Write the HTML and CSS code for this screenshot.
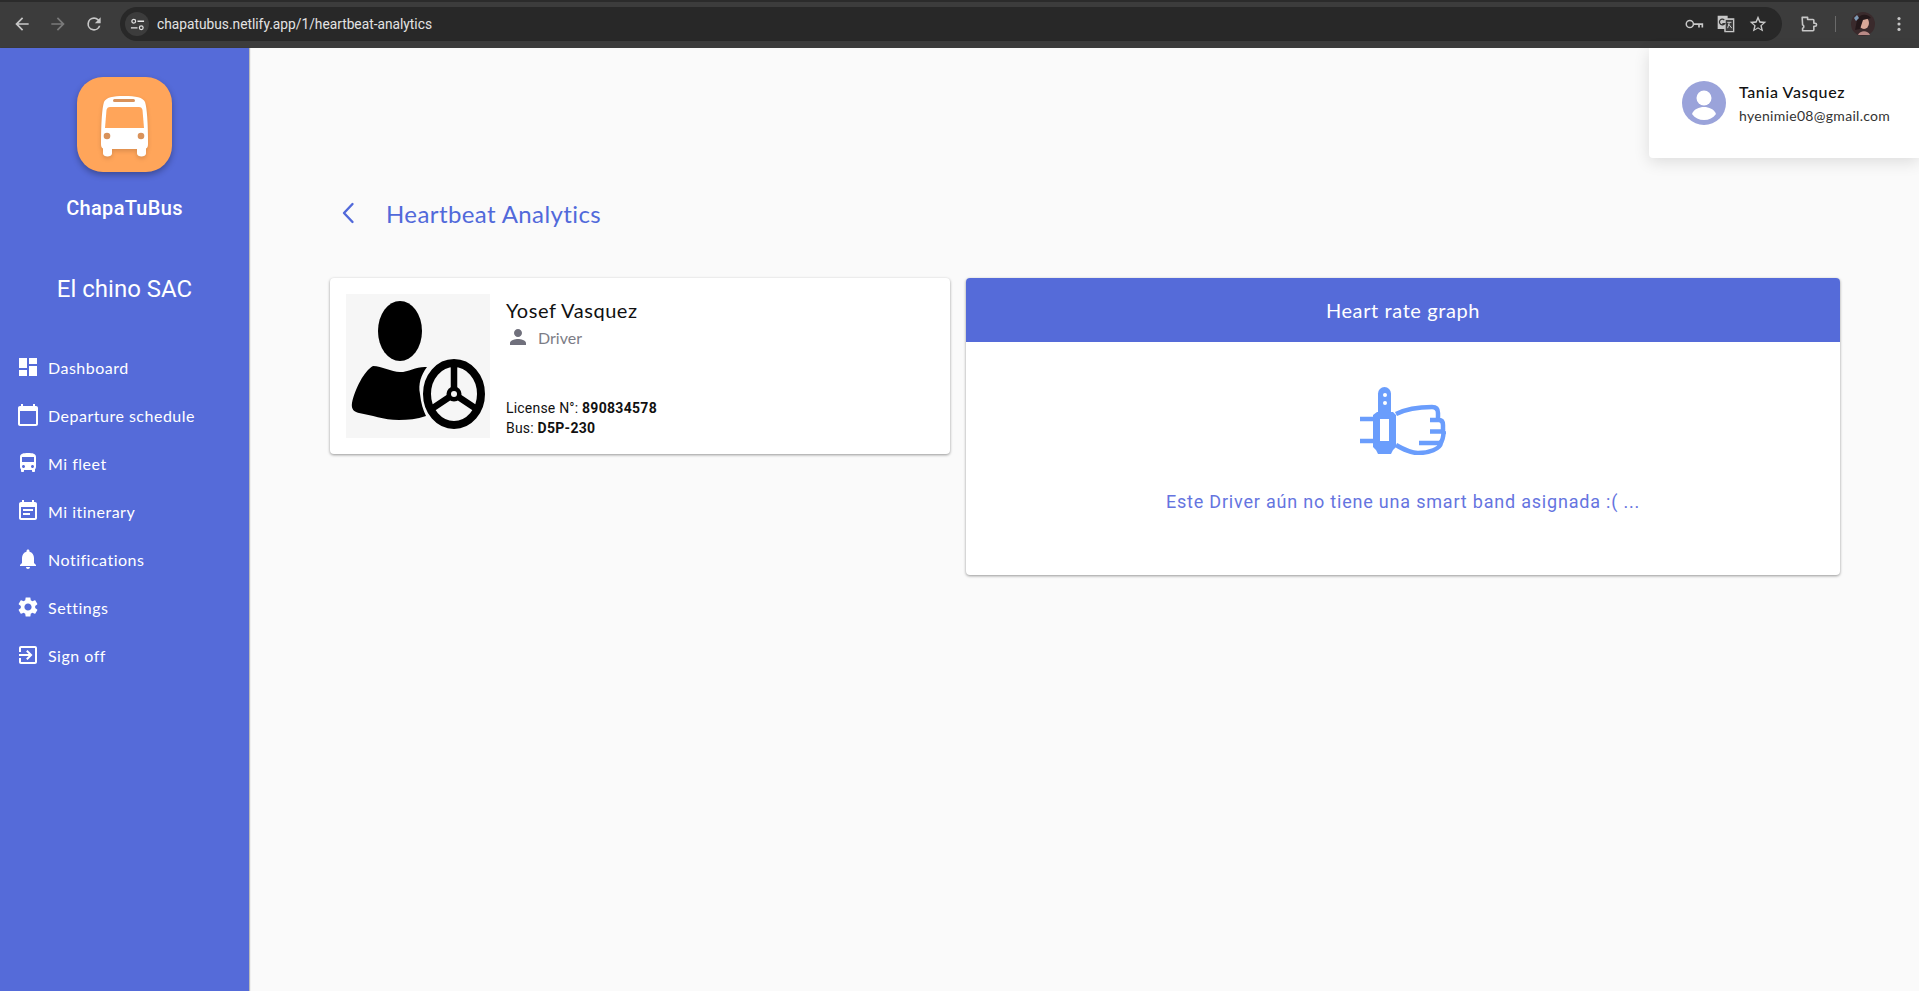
FILE: index.html
```html
<!DOCTYPE html>
<html lang="en">
<head>
  <meta charset="UTF-8">
  <title>Heartbeat Analytics</title>
  <link rel="stylesheet" href="styles.css">
</head>
<body>
  <header class="browser-bar">
    <div class="browser-nav">
      <svg class="browser-icon" viewBox="0 0 24 24"><path d="M20 11H7.83l5.59-5.59L12 4l-8 8 8 8 1.41-1.41L7.83 13H20v-2z"/></svg>
      <svg class="browser-icon browser-icon-off" viewBox="0 0 24 24"><path d="M4 11h12.17l-5.59-5.59L12 4l8 8-8 8-1.41-1.41L16.17 13H4v-2z"/></svg>
      <svg class="browser-icon" viewBox="0 0 24 24"><path d="M17.65 6.35A7.96 7.96 0 0 0 12 4a8 8 0 1 0 7.73 10h-2.08A6 6 0 1 1 12 6c1.66 0 3.14.69 4.22 1.78L13 11h7V4l-2.35 2.35z"/></svg>
    </div>
    <div class="omnibox">
      <span class="site-chip">
        <svg viewBox="0 0 16 16"><circle cx="4" cy="4.500" r="2" fill="none" stroke="#e3e3e3" stroke-width="1.300"/><path d="M8 3.800h7v1.400H8zM1 10.800h7v1.400H1z"/><circle cx="12" cy="11.500" r="2" fill="none" stroke="#e3e3e3" stroke-width="1.300"/></svg>
      </span>
      <span class="url">chapatubus.netlify.app/1/heartbeat-analytics</span>
      <div class="omni-actions">
        <svg class="browser-icon" viewBox="0 0 24 24"><circle cx="7" cy="12" r="4.300" fill="none" stroke="#c7c7c7" stroke-width="1.800"/><path d="M11.500 11.100H23v5h-2v-2.900h-2v2.900h-2v-2.900h-5.500z"/></svg>
        <svg class="browser-icon" viewBox="0 0 24 24"><path d="M2 2h12v3h8v17H10v-4H2V2z" fill="#c7c7c7"/><path d="M11 6.500h10v14.500H11z" fill="#3c3c3c" stroke="#c7c7c7" stroke-width="1.200"/><path d="M13.500 10h5M16 10l-2 7M15 12l4 5" stroke="#c7c7c7" stroke-width="1.200" fill="none"/><path d="M10 7.300A3.400 3.400 0 1 0 10.400 11.500H7.600" stroke="#333" stroke-width="1.500" fill="none"/></svg>
        <svg class="browser-icon" viewBox="0 0 24 24"><path d="M12 15.900l-3.760 2.270 1-4.280-3.320-2.880 4.380-.38L12 6.600l1.700 4.030 4.380.38-3.320 2.880 1 4.280L12 15.900zM22 9.240l-7.190-.61L12 2 9.190 8.630 2 9.240l5.460 4.730L5.820 21 12 17.270 18.180 21l-1.630-7.030L22 9.240z"/></svg>
      </div>
    </div>
    <div class="browser-tools">
      <svg class="browser-icon" viewBox="0 0 24 24"><path d="M5 4h6.500v2.500H18a1 1 0 0 1 1 1V11h1.500a1.800 1.800 0 0 1 0 3.600H19V19a1 1 0 0 1-1 1H5.500v-2.800a2 2 0 0 0 1.500-2 2.200 2.200 0 0 0-1.500-2.200z" fill="none" stroke="#c7c7c7" stroke-width="1.900" stroke-linejoin="round"/></svg>
      <span class="tool-divider"></span>
      <svg class="profile-pic" viewBox="0 0 24 24"><circle cx="12" cy="12" r="12" fill="#3a2a2c"/><ellipse cx="13" cy="11" rx="5" ry="6" fill="#d8a797"/><path d="M6 8c2-6 10-7 14-2l-8 2-3 9-5 1z" fill="#24181a"/><path d="M7 23c2-5 10-5 12 0z" fill="#b98a86"/><path d="M3 6l3-3 2 3-3 3z" fill="#7d9ab5"/></svg>
      <svg class="browser-icon" viewBox="0 0 24 24"><circle cx="12" cy="5.500" r="1.900"/><circle cx="12" cy="12" r="1.900"/><circle cx="12" cy="18.500" r="1.900"/></svg>
    </div>
  </header>

  <div class="app">
    <aside class="sidebar">
      <div class="logo">
        <svg viewBox="0 0 95 95">
          <path d="M47 19c-11 0-18 1.500-20 6-2 6-3 22-3 42 0 3 1 4 2 4.500v5c0 4 9 4 9 0V72h25v4.500c0 4 9 4 9 0v-5c1-.5 2-1.500 2-4.500 0-20-1-36-3-42-2-4.500-9-6-21-6z" fill="#fff"/>
          <path d="M33 30h29c2 0 3 1 3.500 3l1.500 18H28l1.500-18c.5-2 1.500-3 3.500-3z" fill="#ffa55a"/>
          <rect x="36" y="22" width="22" height="3" rx="1.500" fill="#d9925a"/>
          <circle cx="30" cy="59" r="3.300" fill="#d9925a"/>
          <circle cx="64" cy="59" r="3.300" fill="#d9925a"/>
        </svg>
      </div>
      <div class="brand">ChapaTuBus</div>
      <div class="company">El chino SAC</div>
      <nav class="menu">
        <a class="menu-item"><svg viewBox="0 0 24 24"><path d="M3 13h8V3H3v10zm0 8h8v-6H3v6zm10 0h8V11h-8v10zm0-18v6h8V3h-8z"/></svg>Dashboard</a>
        <a class="menu-item"><svg viewBox="0 0 24 24"><path d="M20 3h-1V1h-2v2H7V1H5v2H4c-1.100 0-2 .9-2 2v16c0 1.100.9 2 2 2h16c1.100 0 2-.9 2-2V5c0-1.100-.9-2-2-2zm0 18H4V8h16v13z"/></svg>Departure schedule</a>
        <a class="menu-item"><svg viewBox="0 0 24 24"><path d="M4 16c0 .88.39 1.670 1 2.220V20c0 .55.45 1 1 1h1c.55 0 1-.45 1-1v-1h8v1c0 .55.45 1 1 1h1c.55 0 1-.45 1-1v-1.780c.61-.55 1-1.340 1-2.220V6c0-3.500-3.580-4-8-4s-8 .5-8 4v10zm3.500 1c-.83 0-1.500-.67-1.500-1.500S6.670 14 7.500 14s1.500.67 1.500 1.500S8.330 17 7.500 17zm9 0c-.83 0-1.500-.67-1.500-1.500s.67-1.500 1.500-1.500 1.500.67 1.500 1.500-.67 1.500-1.500 1.500zm1.500-6H6V6h12v5z"/></svg>Mi fleet</a>
        <a class="menu-item"><svg viewBox="0 0 24 24"><path d="M17 10H7v2h10v-2zm2-7h-1V1h-2v2H8V1H6v2H5c-1.110 0-1.990.9-1.990 2L3 19c0 1.100.89 2 2 2h14c1.100 0 2-.9 2-2V5c0-1.100-.9-2-2-2zm0 16H5V8h14v11zm-5-5H7v2h7v-2z"/></svg>Mi itinerary</a>
        <a class="menu-item"><svg viewBox="0 0 24 24"><path d="M12 22c1.100 0 2-.9 2-2h-4c0 1.100.89 2 2 2zm6-6v-5c0-3.070-1.640-5.640-4.500-6.320V4c0-.83-.67-1.500-1.500-1.500s-1.500.67-1.500 1.500v.68C7.630 5.360 6 7.920 6 11v5l-2 2v1h16v-1l-2-2z"/></svg>Notifications</a>
        <a class="menu-item"><svg viewBox="0 0 24 24"><path d="M19.140 12.940c.04-.3.06-.61.06-.94 0-.32-.02-.64-.07-.94l2.030-1.580c.18-.14.23-.41.12-.61l-1.920-3.320c-.12-.22-.37-.29-.59-.22l-2.390.96c-.5-.38-1.030-.7-1.620-.94l-.36-2.540c-.04-.24-.24-.41-.48-.41h-3.840c-.24 0-.43.17-.47.41l-.36 2.540c-.59.24-1.130.57-1.620.94l-2.390-.96c-.22-.08-.47 0-.59.22L2.740 8.870c-.12.21-.08.47.12.61l2.030 1.580c-.05.3-.09.63-.09.94s.02.64.07.94l-2.030 1.580c-.18.14-.23.41-.12.61l1.920 3.320c.12.22.37.29.59.22l2.390-.96c.5.38 1.030.7 1.620.94l.36 2.540c.05.24.24.41.48.41h3.840c.24 0 .44-.17.47-.41l.36-2.540c.59-.24 1.130-.56 1.620-.94l2.390.96c.22.08.47 0 .59-.22l1.920-3.320c.12-.22.07-.47-.12-.61l-2.010-1.580zM12 15.600c-1.980 0-3.600-1.620-3.600-3.600s1.620-3.600 3.600-3.600 3.600 1.620 3.600 3.600-1.620 3.600-3.600 3.600z"/></svg>Settings</a>
        <a class="menu-item"><svg viewBox="0 0 24 24"><path d="M10.090 15.590L11.500 17l5-5-5-5-1.410 1.410L12.670 11H3v2h9.670l-2.580 2.590zM19 3H5c-1.110 0-2 .9-2 2v4h2V5h14v14H5v-4H3v4c0 1.100.89 2 2 2h14c1.100 0 2-.9 2-2V5c0-1.100-.9-2-2-2z"/></svg>Sign off</a>
      </nav>
    </aside>

    <main class="content">
      <div class="user-popup">
        <svg class="user-avatar" viewBox="0 0 44 44">
          <circle cx="22" cy="22" r="22" fill="#9aa3da"/>
          <circle cx="22" cy="17" r="7.500" fill="#fff"/>
          <path d="M10 33c2-5 7-7 12-7s10 2 12 7c-3 4-7 6-12 6s-9-2-12-6z" fill="#fff"/>
        </svg>
        <div class="user-text">
          <div class="user-name">Tania Vasquez</div>
          <div class="user-email">hyenimie08@gmail.com</div>
        </div>
      </div>

      <div class="page-head">
        <svg class="back-icon" viewBox="0 0 14 22"><path d="M11.500 2L3 11l8.500 9" fill="none" stroke="#5169da" stroke-width="2.400" stroke-linecap="round" stroke-linejoin="round"/></svg>
        <h1 class="page-title">Heartbeat Analytics</h1>
      </div>

      <div class="panels">
        <section class="card driver-card">
          <svg class="driver-pic" viewBox="0 0 144 144">
            <rect width="144" height="144" fill="#f6f6f6"/>
            <ellipse cx="54" cy="37" rx="22" ry="30"/>
            <path d="M6 109c3-14 12-32 21-37 9 0 18 6 27 6s17-6 27-5c-6 8-9 17-7 27 1 9 3 16 6 22-9 3-18 4-27 4-16 0-27-5-40-7-5-1-8-4-7-10z"/>
            <ellipse cx="108" cy="100" rx="27" ry="31" fill="#f6f6f6" stroke="#000" stroke-width="8"/>
            <path d="M108 100V70M108 100L84 116M108 100l24 16" stroke="#000" stroke-width="6.500" fill="none"/>
            <circle cx="108" cy="100" r="7.500"/>
            <circle cx="108" cy="100" r="3" fill="#f6f6f6"/>
          </svg>
          <div class="driver-info">
            <div class="driver-name">Yosef Vasquez</div>
            <div class="driver-role">
              <svg viewBox="0 0 24 24"><path d="M12 12c2.210 0 4-1.790 4-4s-1.790-4-4-4-4 1.790-4 4 1.790 4 4 4zm0 2c-2.670 0-8 1.340-8 4v2h16v-2c0-2.660-5.330-4-8-4z"/></svg>
              Driver
            </div>
            <div class="driver-meta">
              <div>License N°: <b>890834578</b></div>
              <div>Bus: <b>D5P-230</b></div>
            </div>
          </div>
        </section>

        <section class="card graph-card">
          <div class="graph-head">Heart rate graph</div>
          <div class="graph-body">
            <svg class="band-icon" viewBox="0 0 86 68">
              <path d="M18 25V6.500a6.500 6.500 0 0 1 13 0V25z" fill="#6a9dfc"/>
              <circle cx="25" cy="8" r="2" fill="#fff"/>
              <circle cx="25" cy="16" r="2" fill="#fff"/>
              <path fill-rule="evenodd" d="M17 25h16l3 3v32l-3 3-2 4H18l-2-4-3-3V28zM20 32v22h9V32z" fill="#6a9dfc"/>
              <g fill="none" stroke="#6a9dfc" stroke-width="4.500">
                <path d="M0 32h13M0 54h13"/>
                <path d="M36 27C46 22 58 20 72 20c4 0 6 2 6 6v7"/>
                <path d="M70 33h9c3 0 4 2 4 5v6"/>
                <path d="M70 44.500h13c2 0 3 1 3 0"/>
                <path d="M83.500 44c0 6-1 10-3.500 12"/>
                <path d="M59 56h22c-1 6-12 10-23 10-8 0-15-4-22-8"/>
              </g>
            </svg>
            <p class="graph-msg">Este Driver aún no tiene una smart band asignada :( ...</p>
          </div>
        </section>
      </div>
    </main>
  </div>
</body>
</html>
```

FILE: styles.css
```css
* {
  box-sizing: border-box;
}
html, body {
  height: 100%;
}
body {
  margin: 0;
  overflow: hidden;
  display: flex;
  flex-direction: column;
  font-family: "Lato", sans-serif;
  background: #fafafa;
}

/* browser chrome */
.browser-bar {
  height: 48px;
  flex-shrink: 0;
  display: flex;
  align-items: center;
  background: #3c3c3c;
  border-top: 2px solid #2b2b2b;
  padding-bottom: 2px;
}
.browser-icon {
  width: 20px;
  height: 20px;
  fill: #c7c7c7;
}
.browser-icon-off {
  fill: #7a7a7a;
}
.browser-nav {
  width: 120px;
  padding-left: 12px;
  display: flex;
  gap: 16px;
}
.omnibox {
  width: 1662px;
  height: 34px;
  border-radius: 17px;
  background: #282828;
  display: flex;
  align-items: center;
  padding-left: 5px;
}
.site-chip {
  width: 24px;
  height: 24px;
  border-radius: 50%;
  background: #3c3c3c;
  display: flex;
  align-items: center;
  justify-content: center;
}
.site-chip svg {
  width: 15px;
  height: 15px;
  fill: #e3e3e3;
}
.url {
  margin-left: 8px;
  font-family: "Roboto", sans-serif;
  font-size: 13.750px;
  color: #e3e3e3;
}
.omni-actions {
  margin-left: auto;
  padding-right: 14px;
  display: flex;
  gap: 12px;
}
.browser-tools {
  flex: 1;
  display: flex;
  align-items: center;
  padding-left: 16px;
}
.tool-divider {
  width: 1px;
  height: 16px;
  background: #6a6a6a;
  margin: 0 15px 0 17px;
}
.profile-pic {
  width: 24px;
  height: 24px;
  margin-right: 14px;
}

.app {
  flex: 1;
  display: flex;
  min-height: 0;
}

/* sidebar */
.sidebar {
  width: 249px;
  flex-shrink: 0;
  background: #556bd9;
  color: #fff;
  padding-top: 29px;
  display: flex;
  flex-direction: column;
  align-items: center;
  box-shadow: 1px 0 1px rgba(0,0,0,0.25);
  z-index: 1;
}
.logo {
  width: 95px;
  height: 95px;
  border-radius: 26px;
  background: #ffa55a;
  box-shadow: 0 3px 6px rgba(0,0,0,0.3);
}
.logo svg {
  display: block;
  filter: drop-shadow(0 2px 2px rgba(0,0,0,0.15));
}
.brand {
  margin-top: 24px;
  font-family: "Roboto", sans-serif;
  font-weight: 500;
  font-size: 20px;
  line-height: 24px;
  letter-spacing: 0.3px;
}
.company {
  margin-top: 53px;
  font-family: "Roboto", sans-serif;
  font-size: 24px;
  line-height: 32px;
}
.menu {
  align-self: stretch;
  margin-top: 38px;
  display: flex;
  flex-direction: column;
}
.menu-item {
  height: 48px;
  padding-left: 16px;
  display: flex;
  align-items: center;
  gap: 8px;
  font-size: 16px;
  letter-spacing: 0.5px;
  color: #fff;
}
.menu-item svg {
  width: 24px;
  height: 24px;
  fill: #fff;
}

/* main area */
.content {
  flex: 1;
  position: relative;
  padding: 145px 79px 0 81px;
}
.user-popup {
  position: absolute;
  top: 0;
  right: 0;
  width: 270px;
  height: 110px;
  padding-left: 33px;
  display: flex;
  align-items: center;
  gap: 13px;
  background: #fff;
  border-radius: 0 0 0 4px;
  box-shadow: 0 4px 16px rgba(0,0,0,0.12);
}
.user-avatar {
  width: 44px;
  height: 44px;
}
.user-text {
  padding-top: 2px;
}
.user-name {
  font-size: 16px;
  font-weight: 500;
  line-height: 20px;
  letter-spacing: 0.6px;
  color: #111;
}
.user-email {
  margin-top: 4px;
  font-size: 14px;
  line-height: 20px;
  letter-spacing: 0.3px;
  color: #333;
}
.page-head {
  height: 40px;
  margin-bottom: 45px;
  padding-left: 11px;
  display: flex;
  align-items: center;
  gap: 31px;
}
.back-icon {
  width: 14px;
  height: 22px;
}
.page-title {
  margin: 0;
  font-size: 24px;
  font-weight: 400;
  letter-spacing: 0.4px;
  color: #5169da;
}
.panels {
  display: grid;
  grid-template-columns: 620px 1fr;
  gap: 16px;
  align-items: start;
}
.card {
  background: #fff;
  border-radius: 4px;
  box-shadow: 0 1px 3px rgba(0,0,0,0.4);
}
.driver-card {
  height: 176px;
  padding: 16px;
  display: flex;
  gap: 16px;
}
.driver-pic {
  width: 144px;
  height: 144px;
  flex-shrink: 0;
}
.driver-info {
  flex: 1;
  display: flex;
  flex-direction: column;
}
.driver-name {
  font-size: 20px;
  line-height: 32px;
  letter-spacing: 0.55px;
  color: #111;
}
.driver-role {
  margin-top: -1px;
  display: flex;
  align-items: center;
  gap: 8px;
  font-size: 16px;
  color: #7c7c86;
}
.driver-role svg {
  width: 24px;
  height: 24px;
  fill: #70707c;
}
.driver-meta {
  margin-top: auto;
  font-family: "Roboto", sans-serif;
  font-size: 14px;
  line-height: 20px;
  letter-spacing: 0.2px;
  color: #111;
}
.driver-meta b {
  font-weight: 700;
  letter-spacing: 0.3px;
}
.graph-card {
  height: 297px;
  overflow: hidden;
}
.graph-head {
  height: 64px;
  display: flex;
  align-items: center;
  justify-content: center;
  background: #556bd9;
  color: #fff;
  font-size: 20px;
  letter-spacing: 0.6px;
}
.graph-body {
  padding-top: 45px;
  display: flex;
  flex-direction: column;
  align-items: center;
}
.band-icon {
  width: 86px;
  height: 68px;
}
.graph-msg {
  margin: 35px 0 0;
  font-family: "Roboto", sans-serif;
  font-size: 18px;
  line-height: 24px;
  letter-spacing: 0.8px;
  color: #6574e0;
}
```
